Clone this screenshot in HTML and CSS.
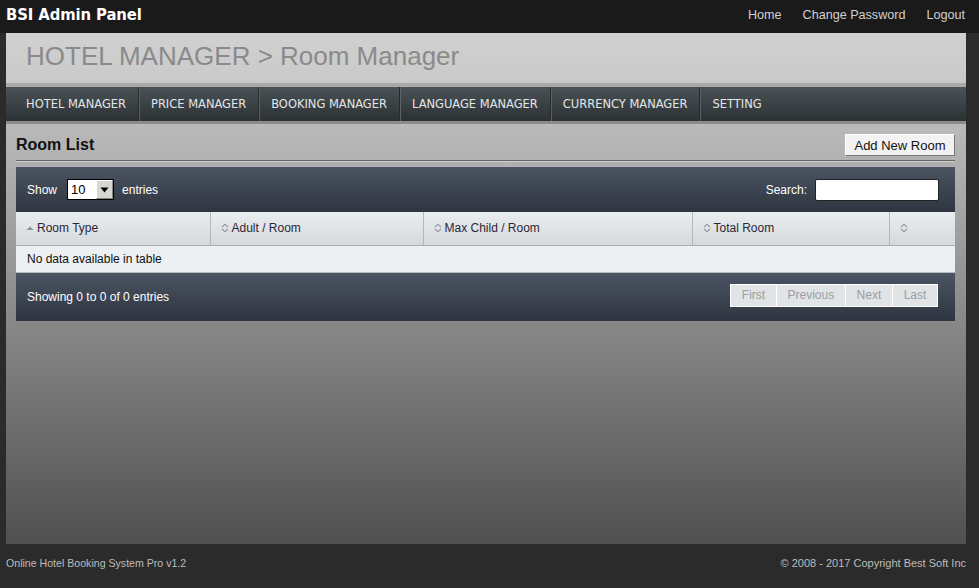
FILE: index.html
```html
<!DOCTYPE html>
<html>
<head>
<meta charset="utf-8">
<title>BSI Admin Panel</title>
<link rel="stylesheet" href="styles.css">
</head>
<body>
<div class="topbar">
  <div class="brand">BSI Admin Panel</div>
  <div class="toplinks">
    <a href="#">Home</a>
    <a href="#">Change Password</a>
    <a href="#">Logout</a>
  </div>
</div>
<div class="main">
  <div class="header"><h1>HOTEL MANAGER &gt; Room Manager</h1></div>
  <ul class="nav">
    <li>HOTEL MANAGER</li>
    <li>PRICE MANAGER</li>
    <li>BOOKING MANAGER</li>
    <li>LANGUAGE MANAGER</li>
    <li>CURRENCY MANAGER</li>
    <li class="last">SETTING</li>
  </ul>
  <div class="content">
    <div class="titlebar">
      <h2>Room List</h2>
      <button class="addbtn">Add New Room</button>
    </div>
    <div class="dt">
      <div class="dt-top">
        <div class="length">Show
          <span class="sel"><select><option>10</option><option>25</option></select><span class="selarrow"><svg width="9" height="6" viewBox="0 0 9 6"><path d="M0.5 0.5h8L4.5 5.5z" fill="#000"/></svg></span></span>
          entries</div>
        <div class="search">Search: <input type="text"></div>
      </div>
      <table>
        <thead>
          <tr>
            <th class="c1"><svg class="sort" width="8" height="10" viewBox="0 0 8 10"><path d="M0.5 7h7L4 3.5z" fill="#8c9196"/></svg>Room Type</th>
            <th class="c2"><svg class="sort" width="8" height="10" viewBox="0 0 8 10"><path d="M1 4.2L4 1.2L7 4.2M1 5.8L4 8.8L7 5.8" fill="none" stroke="#8c9196" stroke-width="1.1"/></svg>Adult / Room</th>
            <th class="c3"><svg class="sort" width="8" height="10" viewBox="0 0 8 10"><path d="M1 4.2L4 1.2L7 4.2M1 5.8L4 8.8L7 5.8" fill="none" stroke="#8c9196" stroke-width="1.1"/></svg>Max Child / Room</th>
            <th class="c4"><svg class="sort" width="8" height="10" viewBox="0 0 8 10"><path d="M1 4.2L4 1.2L7 4.2M1 5.8L4 8.8L7 5.8" fill="none" stroke="#8c9196" stroke-width="1.1"/></svg>Total Room</th>
            <th class="c5"><svg class="sort" width="8" height="10" viewBox="0 0 8 10"><path d="M1 4.2L4 1.2L7 4.2M1 5.8L4 8.8L7 5.8" fill="none" stroke="#8c9196" stroke-width="1.1"/></svg></th>
          </tr>
        </thead>
        <tbody>
          <tr><td colspan="5">No data available in table</td></tr>
        </tbody>
      </table>
      <div class="dt-bottom">
        <div class="info">Showing 0 to 0 of 0 entries</div>
        <div class="paging">
          <span class="pbtn">First</span><span class="pbtn">Previous</span><span class="pbtn">Next</span><span class="pbtn">Last</span>
        </div>
      </div>
    </div>
  </div>
</div>
<div class="footer">
  <span class="fl">Online Hotel Booking System Pro v1.2</span>
  <span>© 2008 - 2017 Copyright Best Soft Inc</span>
</div>
</body>
</html>
```
FILE: styles.css
```css
* { box-sizing: border-box; }
html, body { margin: 0; padding: 0; }
body {
  background: #2b2b2b;
  font-family: "Liberation Sans", Arial, sans-serif;
  width: 979px;
  height: 588px;
  overflow: hidden;
}
.topbar {
  height: 33px;
  background: #1a1a1a;
  display: flex;
  align-items: center;
  justify-content: space-between;
  padding: 0 14px 0 6px;
}
.brand {
  font-family: "DejaVu Sans Condensed", "DejaVu Sans", sans-serif;
  font-weight: bold;
  font-size: 16.5px;
  color: #fff;
  letter-spacing: -0.1px;
  margin-top: -4px;
}
.toplinks { display: flex; gap: 21px; margin-top: -4px; }
.toplinks a {
  color: #d0d0d0;
  text-decoration: none;
  font-size: 12.6px;
}
.main {
  margin-left: 6px;
  width: 960px;
  height: 511px;
  display: flex;
  flex-direction: column;
}
.header {
  height: 54px;
  background: linear-gradient(#d1d1d1, #c9c9c9);
  border-bottom: 4px solid #a9a9a9;
  padding: 8px 0 0 20px;
}
.header h1 {
  margin: 0;
  font-weight: normal;
  font-size: 26px;
  color: #8a8a8a;
}
.nav {
  list-style: none;
  margin: 0;
  padding: 0 0 0 8px;
  height: 37px;
  background: linear-gradient(#4b5357, #2b3033);
  border-bottom: 3px solid #8c8c8c;
  display: flex;
}
.nav li {
  font-family: "DejaVu Sans Condensed", "DejaVu Sans", sans-serif;
  font-size: 12.75px;
  color: #e2e6e8;
  padding: 0 12px;
  line-height: 34px;
  border-right: 1px solid #262a2c;
  box-shadow: 1px 0 0 #5a6266;
}
.nav li.last { border-right: none; box-shadow: none; }
.content {
  flex: 1;
  background: linear-gradient(#bababa, #505050);
  padding: 11px 11px 0 10px;
}
.titlebar {
  display: flex;
  justify-content: space-between;
  align-items: flex-end;
  border-bottom: 1px solid #666;
  padding-bottom: 2px;
  box-shadow: 0 1px 0 #cfcfcf;
}
.titlebar h2 {
  margin: 0 0 4px 0;
  font-size: 16px;
  font-weight: bold;
  color: #111;
}
.addbtn {
  font-family: "Liberation Sans", Arial, sans-serif;
  font-size: 13px;
  color: #111;
  background: #f2f2f2;
  border: 1px solid #fff;
  border-right-color: #777;
  border-bottom-color: #777;
  width: 110px;
  height: 22px;
  padding: 0;
  margin: 0 0 1px 1px;
  position: relative;
  top: -1px;
}
.dt {
  margin-top: 6px;
  font-size: 12px;
}
.dt-top {
  height: 45px;
  background: linear-gradient(#4b5463, #2f3540);
  display: flex;
  align-items: center;
  justify-content: space-between;
  padding: 0 16px 0 11px;
  color: #fff;
}
.length { display: flex; align-items: center; }
.sel {
  display: inline-flex;
  margin: 0 8px 0 10px;
  width: 47px;
  height: 21px;
  border: 1px solid #000;
  background: #fff;
}
.sel select {
  appearance: none;
  -webkit-appearance: none;
  border: none;
  outline: none;
  background: #fff;
  font-family: "Liberation Sans", Arial, sans-serif;
  font-size: 13px;
  color: #000;
  width: 28px;
  padding: 0 0 0 3px;
  height: 19px;
}
.selarrow {
  width: 17px;
  height: 19px;
  background: #d8d6d0;
  border: 1px solid #fff;
  border-right-color: #888;
  border-bottom-color: #888;
  display: flex;
  align-items: center;
  justify-content: center;
}
.search { display: flex; align-items: center; }
.search input {
  margin-left: 8px;
  width: 124px;
  height: 22px;
  border: 1px solid #222;
  border-radius: 2px;
  background: #fff;
}
table {
  width: 100%;
  border-collapse: collapse;
  table-layout: fixed;
}
th {
  height: 33px;
  text-align: left;
  font-weight: normal;
  color: #2b2638;
  background: linear-gradient(#e9edef, #d5d9dc);
  border-bottom: 1px solid #a9adb0;
  border-left: 1px solid #f4f6f7;
  border-right: 1px solid #b4b8bb;
  padding: 0 0 0 10px;
  font-size: 12px;
}
th.c1 { width: 194px; border-left: none; }
th.c2 { width: 213px; }
th.c3 { width: 269px; }
th.c4 { width: 197px; }
th.c5 { border-right: none; }
.sort { vertical-align: -1px; margin-right: 3px; }
td {
  height: 27px;
  background: #edf0f2;
  color: #111;
  padding: 0 0 0 11px;
  border-bottom: 1px solid #b8bcbf;
}
.dt-bottom {
  height: 48px;
  background: linear-gradient(#4b5463, #2f3540);
  display: flex;
  align-items: center;
  justify-content: space-between;
  padding: 0 17px 0 11px;
  color: #fff;
}
.paging { display: flex; margin-top: -3px; }
.pbtn {
  height: 23px;
  line-height: 21px;
  padding: 0 10.7px;
  background: #e0e4e6;
  color: #9a9ea2;
  border: 1px solid #fff;
  border-right: none;
  font-size: 12px;
}
.pbtn:last-child { border-right: 1px solid #fff; }
.footer {
  height: 44px;
  display: flex;
  justify-content: space-between;
  align-items: center;
  padding: 0 13px 6px 6px;
  color: #bdbdbd;
  font-size: 11px;
}
.fl { font-size: 10.6px; }
```
